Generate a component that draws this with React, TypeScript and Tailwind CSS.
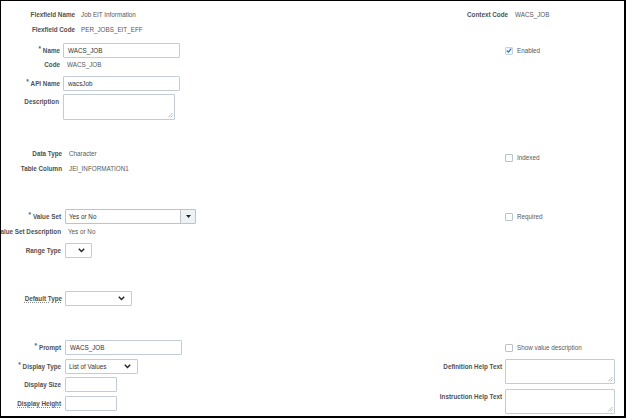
import React from "react";

const font = { fontFamily: '"Liberation Sans", Arial, sans-serif' };

function Lbl({
  w,
  children,
  req,
  dotted,
}: {
  w: number;
  children: React.ReactNode;
  req?: boolean;
  dotted?: boolean;
}) {
  return (
    <div
      className="flex justify-end items-center shrink-0 whitespace-nowrap font-bold text-[#505050]"
      style={{ width: w }}
    >
      {req && <span className="text-[#3d5c7a] relative -top-[2px] mr-[2px]">*</span>}
      <span className={dotted ? "underline decoration-dotted decoration-[#8a8a8a] underline-offset-[1px]" : ""}>
        {children}
      </span>
    </div>
  );
}

function Val({ children }: { children: React.ReactNode }) {
  return <span className="block text-[#585858] whitespace-nowrap">{children}</span>;
}

function Input({ w, value }: { w: number; value?: string }) {
  return (
    <div
      className="h-[15px] border border-[#c3ccd4] bg-white flex items-center pl-[4px] text-[#333] rounded-[1px]"
      style={{ width: w }}
    >
      {value}
    </div>
  );
}

function Grip() {
  return (
    <svg className="absolute right-[1px] bottom-[1px]" width="6" height="6" viewBox="0 0 6 6">
      <path d="M5.5 1 L1 5.5 M5.5 3.5 L3.5 5.5" stroke="#9a9a9a" strokeWidth="0.7" />
    </svg>
  );
}

function TextArea({ w, h }: { w: number; h: number }) {
  return (
    <div
      className="relative border border-[#c3ccd4] bg-white rounded-[1px]"
      style={{ width: w, height: h }}
    >
      <Grip />
    </div>
  );
}

function Chevron() {
  return (
    <svg width="7" height="5" viewBox="0 0 7 5">
      <path d="M0.8 0.8 L3.5 3.6 L6.2 0.8" stroke="#222" strokeWidth="1.4" fill="none" />
    </svg>
  );
}

function Select({ w, value }: { w: number; value?: string }) {
  return (
    <div
      className="h-[15px] border border-[#c3ccd4] bg-white flex items-center justify-between pl-[3px] pr-[6px] text-[#333] rounded-[1px]"
      style={{ width: w }}
    >
      <span>{value}</span>
      <Chevron />
    </div>
  );
}

function Combo({ w, value }: { w: number; value: string }) {
  return (
    <div
      className="h-[15px] border border-[#b9c4cd] bg-white flex items-stretch text-[#333] rounded-[1px]"
      style={{ width: w }}
    >
      <span className="flex-1 flex items-center pl-[3px]">{value}</span>
      <div className="w-[15px] bg-[#eef2f5] border-l border-[#b9c4cd] flex items-center justify-center">
        <svg width="5" height="3" viewBox="0 0 5 3">
          <path d="M0 0 L5 0 L2.5 3 Z" fill="#222" />
        </svg>
      </div>
    </div>
  );
}

function Check({ checked, label }: { checked?: boolean; label: string }) {
  return (
    <div className="flex items-center">
      <div
        className={
          "w-[8px] h-[8px] border rounded-[1px] flex items-center justify-center " +
          (checked ? "border-[#c9d3da] bg-[#f4f7f9]" : "border-[#b8c3cb] bg-white")
        }
      >
        {checked && (
          <svg width="8" height="7" viewBox="0 0 8 7">
            <path d="M1 3.6 L3.1 5.6 L7 1" stroke="#1f6fc4" strokeWidth="1.6" fill="none" />
          </svg>
        )}
      </div>
      <span className="ml-[4px] text-[#585858] whitespace-nowrap">{label}</span>
    </div>
  );
}

export default function App() {
  return (
    <div
      className="w-[626px] h-[418px] bg-white border-t border-l border-r-2 border-b-2 border-black overflow-hidden flex text-[6.3px] leading-[8px]"
      style={font}
    >
      {/* Left column */}
      <div className="w-[419px] shrink-0 flex flex-col">
        <div className="flex items-center h-[14px] mt-[7px]">
          <Lbl w={74}>Flexfield Name</Lbl>
          <div className="ml-[6px]"><Val>Job EIT Information</Val></div>
        </div>
        <div className="flex items-center h-[14px] mt-[1px]">
          <Lbl w={74}>Flexfield Code</Lbl>
          <div className="ml-[6px]"><Val>PER_JOBS_EIT_EFF</Val></div>
        </div>
        <div className="flex items-center h-[15px] mt-[6px]">
          <Lbl w={59} req>Name</Lbl>
          <div className="ml-[3px]"><Input w={117} value="WACS_JOB" /></div>
        </div>
        <div className="flex items-center h-[12px] mt-[1px]">
          <Lbl w={59}>Code</Lbl>
          <div className="ml-[7px]"><Val>WACS_JOB</Val></div>
        </div>
        <div className="flex items-center h-[15px] mt-[5px]">
          <Lbl w={59} req>API Name</Lbl>
          <div className="ml-[3px]"><Input w={117} value="wacsJob" /></div>
        </div>
        <div className="flex items-start h-[26px] mt-[3px]">
          <div className="pt-[4px]"><Lbl w={58}>Description</Lbl></div>
          <div className="ml-[4px]"><TextArea w={112} h={26} /></div>
        </div>
        <div className="flex items-center h-[14px] mt-[27px]">
          <Lbl w={61}>Data Type</Lbl>
          <div className="ml-[7px]"><Val>Character</Val></div>
        </div>
        <div className="flex items-center h-[14px] mt-[1px]">
          <Lbl w={61}>Table Column</Lbl>
          <div className="ml-[7px]"><Val>JEI_INFORMATION1</Val></div>
        </div>
        <div className="flex items-center h-[15px] mt-[33px]">
          <Lbl w={60} req>Value Set</Lbl>
          <div className="ml-[4px]"><Combo w={131} value="Yes or No" /></div>
        </div>
        <div className="flex items-center h-[12px] mt-[2px]">
          <Lbl w={60}>Value Set Description</Lbl>
          <div className="ml-[7px]"><Val>Yes or No</Val></div>
        </div>
        <div className="flex items-center h-[15px] mt-[5px]">
          <Lbl w={60}>Range Type</Lbl>
          <div className="ml-[4px]"><Select w={27} /></div>
        </div>
        <div className="flex items-center h-[15px] mt-[33px]">
          <Lbl w={61} dotted>Default Type</Lbl>
          <div className="ml-[3px]"><Select w={67} /></div>
        </div>
        <div className="flex items-center h-[15px] mt-[34px]">
          <Lbl w={60} req>Prompt</Lbl>
          <div className="ml-[4px]"><Input w={117} value="WACS_JOB" /></div>
        </div>
        <div className="flex items-center h-[15px] mt-[4px]">
          <Lbl w={60} req>Display Type</Lbl>
          <div className="ml-[4px]"><Select w={73} value="List of Values" /></div>
        </div>
        <div className="flex items-center h-[15px] mt-[3px]">
          <Lbl w={60}>Display Size</Lbl>
          <div className="ml-[4px]"><Input w={52} /></div>
        </div>
        <div className="flex items-center h-[15px] mt-[4px]">
          <Lbl w={60} dotted>Display Height</Lbl>
          <div className="ml-[4px]"><Input w={52} /></div>
        </div>
      </div>

      {/* Right column */}
      <div className="flex-1 flex flex-col">
        <div className="flex items-center h-[14px] mt-[7px]">
          <Lbl w={88}>Context Code</Lbl>
          <div className="ml-[7px]"><Val>WACS_JOB</Val></div>
        </div>
        <div className="flex items-center h-[15px] mt-[21px] pl-[85px]">
          <Check checked label="Enabled" />
        </div>
        <div className="flex items-center h-[14px] mt-[93px] pl-[85px]">
          <Check label="Indexed" />
        </div>
        <div className="flex items-center h-[14px] mt-[45px] pl-[85px]">
          <Check label="Required" />
        </div>
        <div className="flex items-center h-[15px] mt-[116px] pl-[85px]">
          <Check label="Show value description" />
        </div>
        <div className="flex items-start h-[25px] mt-[4px]">
          <div className="pt-[4px]"><Lbl w={82}>Definition Help Text</Lbl></div>
          <div className="ml-[3px]"><TextArea w={110} h={25} /></div>
        </div>
        <div className="flex items-start h-[25px] mt-[5px]">
          <div className="pt-[4px]"><Lbl w={82}>Instruction Help Text</Lbl></div>
          <div className="ml-[3px]"><TextArea w={110} h={25} /></div>
        </div>
      </div>
    </div>
  );
}
